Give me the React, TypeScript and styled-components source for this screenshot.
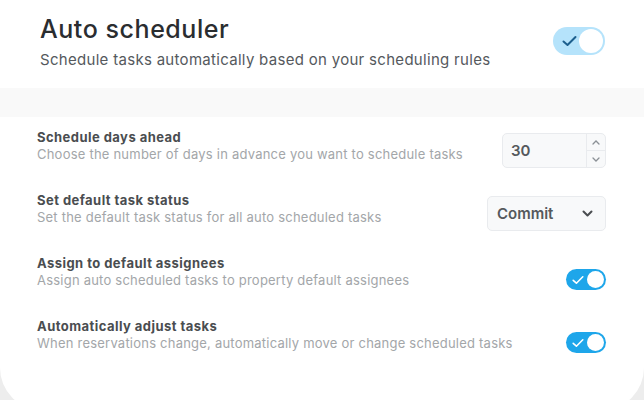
import React from "react";
import styled, { createGlobalStyle } from "styled-components";

const Global = createGlobalStyle`
  html, body {
    margin: 0;
    padding: 0;
    background: #ededed;
    font-family: Inter, "Noto Sans", sans-serif;
    -webkit-font-smoothing: antialiased;
  }
`;

const Page = styled.div`
  width: 644px;
  height: 400px;
  overflow: hidden;
  display: flex;
  flex-direction: column;
`;

const Header = styled.div`
  background: #fff;
  height: 88px;
  box-sizing: border-box;
  padding: 14px 39px 0 40px;
  display: flex;
  justify-content: space-between;
  align-items: flex-start;
`;

const HeaderText = styled.div`
  display: flex;
  flex-direction: column;
`;

const Title = styled.h1`
  margin: 0;
  font-size: 25px;
  font-weight: 500;
  letter-spacing: 0.55px;
  color: #2a2d30;
  line-height: 30px;
`;

const Subtitle = styled.p`
  margin: 6px 0 0;
  font-size: 15px;
  letter-spacing: 0.3px;
  color: #55595d;
  line-height: 20px;
`;

const Band = styled.div`
  height: 29px;
  background: #f9f9f9;
`;

const Card = styled.div`
  background: #fff;
  flex: 1;
  margin-bottom: -10px;
  border-radius: 0 0 42px 42px;
  padding: 12px 38px 0 37px;
  display: flex;
  flex-direction: column;
`;

const Row = styled.div`
  height: 63px;
  display: flex;
  justify-content: space-between;
  align-items: flex-start;
`;

const RowText = styled.div`
  display: flex;
  flex-direction: column;
`;

const RowTitle = styled.div`
  font-size: 13px;
  font-weight: 700;
  letter-spacing: 0.45px;
  color: #4a4d50;
  line-height: 17px;
`;

const RowDesc = styled.div`
  font-size: 13px;
  letter-spacing: 0.22px;
  color: #a3a6a9;
  line-height: 16px;
`;

const Field = styled.div<{ $w: number }>`
  width: ${(p) => p.$w}px;
  height: 35px;
  box-sizing: border-box;
  background: #f8f9fa;
  border: 1px solid #e9ebee;
  border-radius: 5px;
  display: flex;
  align-items: center;
  margin-top: 4px;
  color: #55595d;
  font-size: 15px;
  font-weight: 600;
`;

const FieldValue = styled.span`
  flex: 1;
  padding-left: 8px;
`;

const Spinner = styled.div`
  width: 18px;
  height: 100%;
  border-left: 1px solid #e9ebee;
  display: flex;
  flex-direction: column;
`;

const SpinHalf = styled.div<{ $top?: boolean }>`
  flex: 1;
  display: flex;
  align-items: center;
  justify-content: center;
  border-bottom: ${(p) => (p.$top ? "1px solid #e9ebee" : "none")};
`;

const SelectLabel = styled.span`
  flex: 1;
  padding-left: 9px;
`;

const Chevron = styled.svg`
  margin-right: 12px;
`;

const Switch = styled.div<{ $big?: boolean }>`
  position: relative;
  width: ${(p) => (p.$big ? 52 : 40)}px;
  height: ${(p) => (p.$big ? 28 : 21)}px;
  border-radius: 20px;
  background: ${(p) => (p.$big ? "#b5e3fb" : "#1ea6ea")};
  margin-top: ${(p) => (p.$big ? 13 : 14)}px;
  flex-shrink: 0;
`;

const Knob = styled.div<{ $big?: boolean }>`
  position: absolute;
  top: 2px;
  right: 2px;
  width: ${(p) => (p.$big ? 24 : 17)}px;
  height: ${(p) => (p.$big ? 24 : 17)}px;
  border-radius: 50%;
  background: #fff;
`;

const Check = styled.svg<{ $big?: boolean }>`
  position: absolute;
  left: ${(p) => (p.$big ? 9 : 6)}px;
  top: 50%;
  transform: translateY(-50%);
`;

const Toggle = ({ big }: { big?: boolean }) => (
  <Switch $big={big}>
    <Check
      $big={big}
      width={big ? 15 : 12}
      height={big ? 12 : 10}
      viewBox="0 0 15 12"
      fill="none"
      stroke={big ? "#1c5f8e" : "#fff"}
      strokeWidth={2}
      strokeLinecap="round"
      strokeLinejoin="round"
    >
      <path d="M1.5 6.5 L5.5 10 L13.5 2" />
    </Check>
    <Knob $big={big} />
  </Switch>
);

const Caret = ({ up }: { up?: boolean }) => (
  <svg width="8" height="5" viewBox="0 0 8 5" fill="none" stroke="#8b9096" strokeWidth={1.3} strokeLinecap="round">
    <path d={up ? "M1 4 L4 1 L7 4" : "M1 1 L4 4 L7 1"} />
  </svg>
);

const rows = [
  {
    title: "Schedule days ahead",
    desc: "Choose the number of days in advance you want to schedule tasks",
    kind: "number",
  },
  {
    title: "Set default task status",
    desc: "Set the default task status for all auto scheduled tasks",
    kind: "select",
  },
  {
    title: "Assign to default assignees",
    desc: "Assign auto scheduled tasks to property default assignees",
    kind: "toggle",
  },
  {
    title: "Automatically adjust tasks",
    desc: "When reservations change, automatically move or change scheduled tasks",
    kind: "toggle",
  },
];

export default function App() {
  return (
    <Page>
      <Global />
      <Header>
        <HeaderText>
          <Title>Auto scheduler</Title>
          <Subtitle>Schedule tasks automatically based on your scheduling rules</Subtitle>
        </HeaderText>
        <Toggle big />
      </Header>
      <Band />
      <Card>
        {rows.map((r) => (
          <Row key={r.title}>
            <RowText>
              <RowTitle>{r.title}</RowTitle>
              <RowDesc>{r.desc}</RowDesc>
            </RowText>
            {r.kind === "number" && (
              <Field $w={104}>
                <FieldValue>30</FieldValue>
                <Spinner>
                  <SpinHalf $top>
                    <Caret up />
                  </SpinHalf>
                  <SpinHalf>
                    <Caret />
                  </SpinHalf>
                </Spinner>
              </Field>
            )}
            {r.kind === "select" && (
              <Field $w={119}>
                <SelectLabel>Commit</SelectLabel>
                <Chevron width="11" height="7" viewBox="0 0 11 7" fill="none" stroke="#4a4d50" strokeWidth={2} strokeLinecap="round" strokeLinejoin="round">
                  <path d="M1.5 1.5 L5.5 5.5 L9.5 1.5" />
                </Chevron>
              </Field>
            )}
            {r.kind === "toggle" && <Toggle />}
          </Row>
        ))}
      </Card>
    </Page>
  );
}
